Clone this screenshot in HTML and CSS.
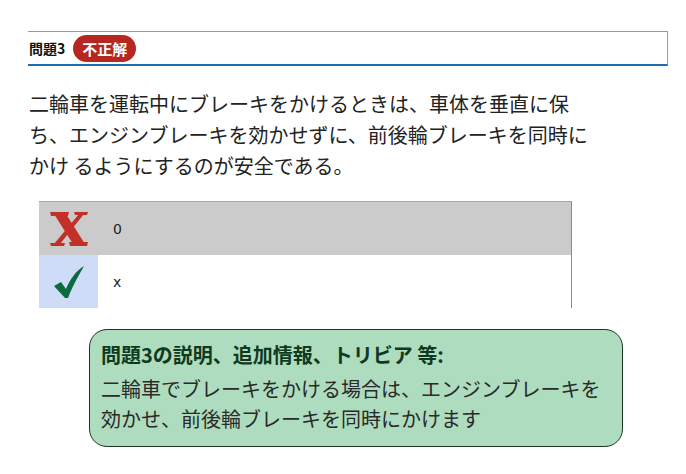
FILE: index.html
```html
<!DOCTYPE html>
<html lang="ja">
<head>
    <meta charset="UTF-8">
    <title>問題3</title>
    <link rel="stylesheet" href="styles.css">
</head>
<body>
    <div class="quiz">
        <!-- Question header -->
        <div class="question-head">
            <span class="question-no">問題3</span>
            <span class="badge">不正解</span>
        </div>

        <p class="question-text">二輪車を運転中にブレーキをかけるときは、車体を垂直に保ち、エンジンブレーキを効かせずに、前後輪ブレーキを同時にかけ るようにするのが安全である。</p>

        <!-- Answers -->
        <div class="answers">
            <div class="answer-row chosen">
                <div class="answer-icon">
                    <svg width="40" height="36" viewBox="0 0 40 36">
                        <path fill="#c3302a" d="M5 3 L17 3 L36 33 L24 33 Z"/>
                        <path fill="#c3302a" d="M30 3 L35 3 L11 33 L5 33 Z"/>
                        <path fill="#c3302a" d="M1 1 L20 1 L19 5 L2 5 Z"/>
                        <path fill="#c3302a" d="M25 1 L39 1 L38 4 L26 4 Z"/>
                        <path fill="#c3302a" d="M1 32 L16 32 L15 35 L2 35 Z"/>
                        <path fill="#c3302a" d="M20 31 L39 31 L38 35 L21 35 Z"/>
                    </svg>
                </div>
                <div class="answer-label">0</div>
            </div>
            <div class="answer-row">
                <div class="answer-icon correct">
                    <svg width="32" height="34" viewBox="0 0 32 34">
                        <path fill="#0b6b3c" d="M1 21 L8 17 L13 24 C17 14 23 6 31 1 C26 10 20 20 15 33 L12 33 Z"/>
                    </svg>
                </div>
                <div class="answer-label">x</div>
            </div>
        </div>

        <!-- Explanation -->
        <div class="explain">
            <div class="explain-title">問題3の説明、追加情報、トリビア 等:</div>
            <div class="explain-body">二輪車でブレーキをかける場合は、エンジンブレーキを効かせ、前後輪ブレーキを同時にかけます</div>
        </div>
    </div>
</body>
</html>
```

FILE: styles.css
```css
/* Global */
body {
    margin: 0;
    padding: 0;
    background: #fff;
    color: #222;
    font-family: "Noto Sans CJK JP", "Noto Sans", sans-serif;
}

.quiz {
    padding: 31px 18px 0 28px;
}

/* Header */
.question-head {
    display: flex;
    align-items: center;
    gap: 8px;
    height: 32px;
    border-top: 1px solid #9a9a9a;
    border-right: 1px solid #9a9a9a;
    border-bottom: 2px solid #1f6cb0;
}

.question-no {
    font-size: 14px;
    font-weight: bold;
    color: #111;
    margin-left: 1px;
}

.badge {
    background: #b5271f;
    color: #fff;
    font-size: 15px;
    font-weight: bold;
    line-height: 27px;
    height: 27px;
    padding: 0 9px;
    border-radius: 14px;
}

/* Question */
.question-text {
    width: 570px;
    margin: 22px 0 20px 1px;
    font-size: 20px;
    line-height: 31px;
    color: #222;
}

/* Answers */
.answers {
    width: 532px;
    margin-left: 11px;
    border-top: 1px solid #a8a8a8;
    border-right: 1px solid #8a8a8a;
}

.answer-row {
    display: flex;
    height: 53px;
    background: #fff;
}

.answer-row.chosen {
    background: #cbcbcb;
}

.answer-icon {
    width: 59px;
    display: flex;
    align-items: center;
    justify-content: center;
}

.answer-icon.correct {
    background: #cfdcf8;
}

.answer-label {
    display: flex;
    align-items: center;
    padding-left: 15px;
    font-family: "DejaVu Sans", sans-serif;
    font-size: 14px;
    color: #222;
}

/* Explanation */
.explain {
    width: 510px;
    margin: 21px 0 0 61px;
    padding: 12px 11px 12px 11px;
    background: #aedcbe;
    border: 1px solid #1d3325;
    border-radius: 18px;
}

.explain-title {
    font-size: 20px;
    font-weight: bold;
    line-height: 26px;
    color: #0f3a1d;
    margin-bottom: 6px;
}

.explain-body {
    font-size: 20px;
    line-height: 30px;
    color: #2a2a2a;
}
```
